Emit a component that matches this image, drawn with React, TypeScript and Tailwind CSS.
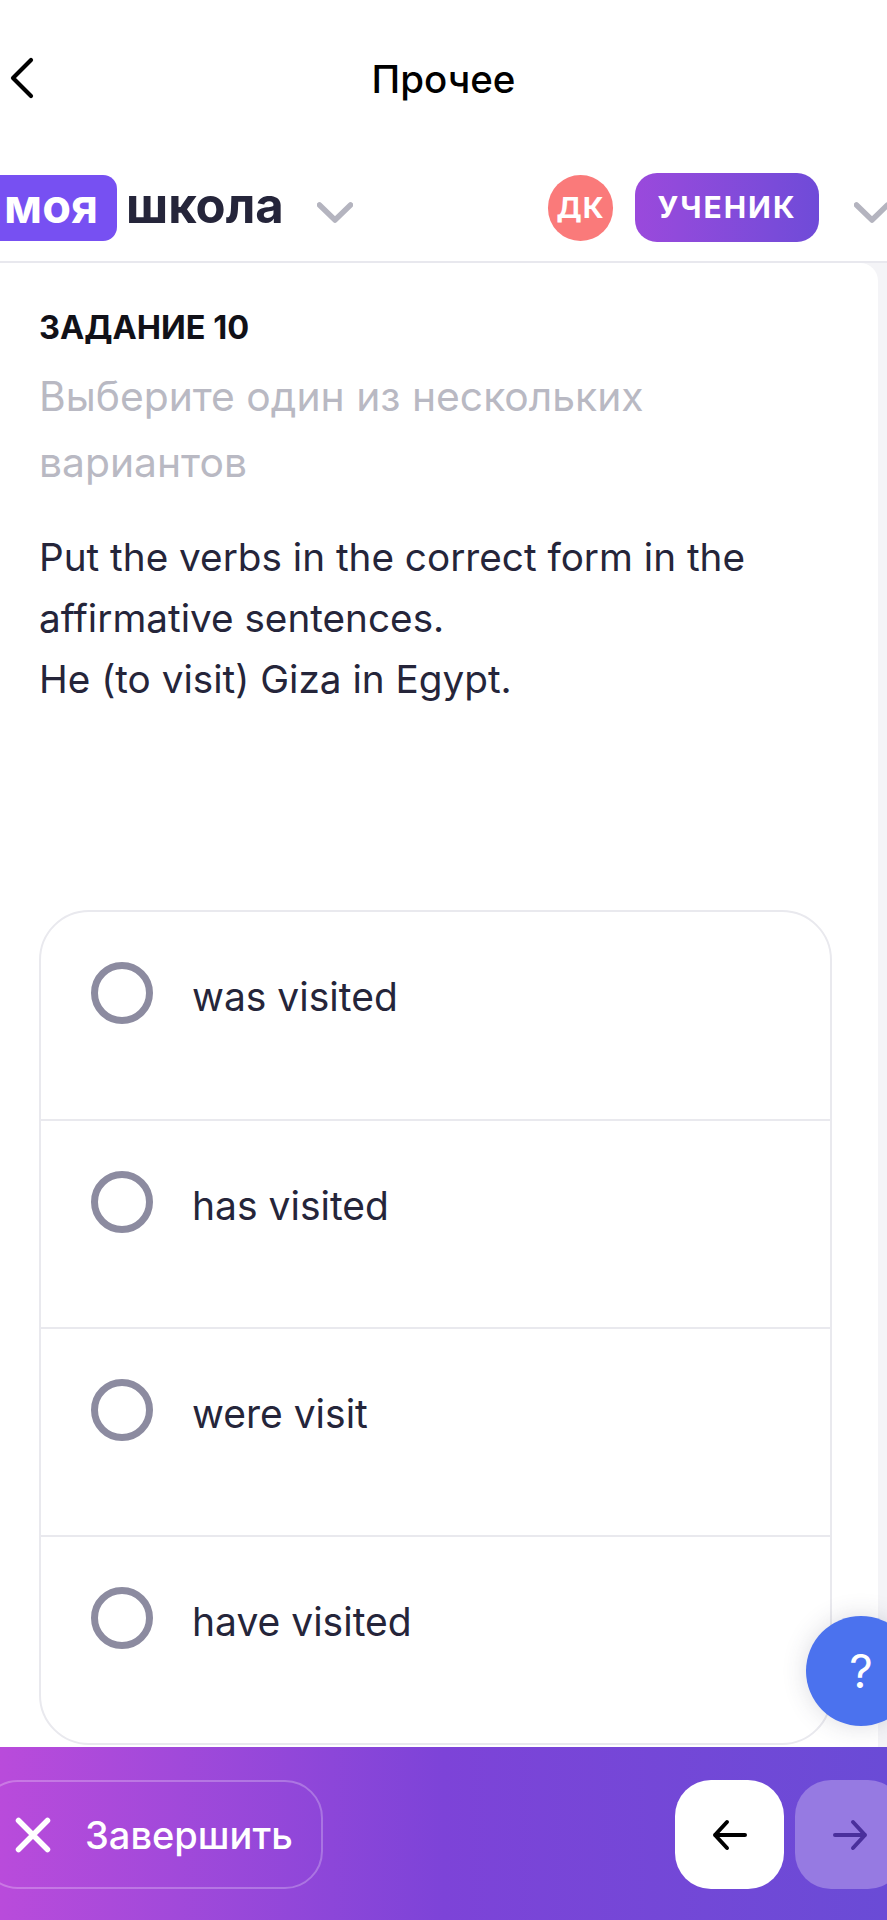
const options = ['was visited', 'has visited', 'were visit', 'have visited'];

function Chevron() {
  return (
    <svg width="36" height="21" viewBox="0 0 36 21" fill="none" className="shrink-0">
      <path d="M2.5 3L18 18L33.5 3" stroke="#b4b4bf" strokeWidth="5.5" strokeLinecap="round" strokeLinejoin="round" />
    </svg>
  );
}

export default function App() {
  return (
    <div className="relative w-[887px] h-[1920px] overflow-hidden flex flex-col bg-[#f4f4f7] font-['Inter',sans-serif] text-[#25253a]">
      {/* Top nav */}
      <div className="h-[158px] shrink-0 bg-white relative flex items-start justify-center pt-[55px]">
        <svg width="26" height="42" viewBox="0 0 26 42" fill="none" className="absolute left-[9px] top-[57px]">
          <path d="M22 3L4 21L22 39" stroke="black" strokeWidth="4.2" strokeLinecap="round" strokeLinejoin="round" />
        </svg>
        <span className="text-[38.5px] leading-[48px] font-medium text-black">Прочее</span>
      </div>

      {/* Logo row */}
      <div className="h-[105px] shrink-0 bg-white border-b-[2px] border-[#e8e8ee] flex items-start pt-[17px] whitespace-nowrap">
        <div className="h-[66px] w-[117px] shrink-0 rounded-r-[14px] bg-[#7750f2] flex items-center pl-[4px] pb-[6px] text-white text-[47px] font-bold leading-none">
          моя
        </div>
        <span className="ml-[9px] w-[156px] shrink-0 h-[66px] flex items-center pb-[6px] text-[49px] font-bold leading-none">школа</span>
        <div className="ml-[35px] mt-[27px] shrink-0"><Chevron /></div>
        <div className="ml-[195px] w-[65px] h-[66px] shrink-0 rounded-full bg-[#fa7a7a] text-white text-[29px] font-bold tracking-[1px] flex items-center justify-center">
          ДК
        </div>
        <div className="ml-[22px] -mt-[2px] w-[184px] h-[69px] shrink-0 rounded-[22px] bg-gradient-to-r from-[#9a49dc] to-[#6f4bd8] text-white text-[30px] font-bold tracking-[2px] flex items-center justify-center">
          УЧЕНИК
        </div>
        <div className="ml-[35px] mt-[27px] shrink-0"><Chevron /></div>
      </div>

      {/* Task card */}
      <div className="flex-1 w-[878px] bg-white rounded-tr-[18px] pl-[39px] pr-[46px] pt-[44px]">
        <div className="text-[32.5px] leading-[42px] font-bold text-[#111118]">ЗАДАНИЕ 10</div>
        <div className="mt-[14px] text-[40.8px] leading-[66px] text-[#b9b9c3]">Выберите один из нескольких вариантов</div>
        <div className="mt-[32px] text-[38.7px] leading-[61px] font-normal">
          Put the verbs in the correct form in the affirmative sentences.
          <br />
          He (to visit) Giza in Egypt.
        </div>

        <div className="mt-[200px] w-[793px] rounded-[50px] border-[2px] border-[#e9e9ee]">
          {options.map((o, i) => (
            <div
              key={o}
              className={`flex items-start pl-[50px] pt-[50px] ${i > 0 ? 'h-[208px] border-t-[2px] border-[#e9e9ee]' : 'h-[207px]'}`}
            >
              <div className="w-[62px] h-[62px] rounded-full border-[7px] border-[#8c8ba0] shrink-0" />
              <span className="ml-[39px] mt-[5px] text-[39px] leading-[60px]">{o}</span>
            </div>
          ))}
        </div>
      </div>

      {/* Help button */}
      <div className="absolute left-[806px] top-[1616px] w-[110px] h-[110px] rounded-full bg-[#4b72ee] shadow-[0_0_24px_rgba(60,60,90,0.18)] flex items-center justify-center text-white text-[46px] font-normal">
        ?
      </div>

      {/* Bottom bar */}
      <div className="absolute left-0 right-0 top-[1747px] h-[173px] bg-gradient-to-r from-[#b94bdb] via-[#7d43d8] to-[#6a4bd6] flex items-start pt-[33px]">
        <div className="-ml-[20px] w-[343px] h-[109px] shrink-0 rounded-[38px] border-[2px] border-white/25 flex items-center pl-[33px] text-white">
          <svg width="36" height="36" viewBox="0 0 36 36" fill="none" className="shrink-0">
            <path d="M3.5 3.5L32.5 32.5M32.5 3.5L3.5 32.5" stroke="white" strokeWidth="5.5" strokeLinecap="round" />
          </svg>
          <span className="ml-[34px] text-[38px] font-medium leading-none">Завершить</span>
        </div>
        <div className="ml-[352px] w-[109px] h-[109px] rounded-[36px] bg-white shrink-0 flex items-center justify-center">
          <svg width="36" height="32" viewBox="0 0 36 32" fill="none">
            <path d="M33 16H3M15 3L3 16L15 29" stroke="black" strokeWidth="4" strokeLinecap="round" strokeLinejoin="round" />
          </svg>
        </div>
        <div className="ml-[11px] w-[109px] h-[109px] rounded-[36px] bg-[#967ae2] shrink-0 flex items-center pl-[37px]">
          <svg width="36" height="32" viewBox="0 0 36 32" fill="none">
            <path d="M3 16H33M21 3L33 16L21 29" stroke="#4a2f9c" strokeWidth="4" strokeLinecap="round" strokeLinejoin="round" />
          </svg>
        </div>
      </div>
    </div>
  );
}
